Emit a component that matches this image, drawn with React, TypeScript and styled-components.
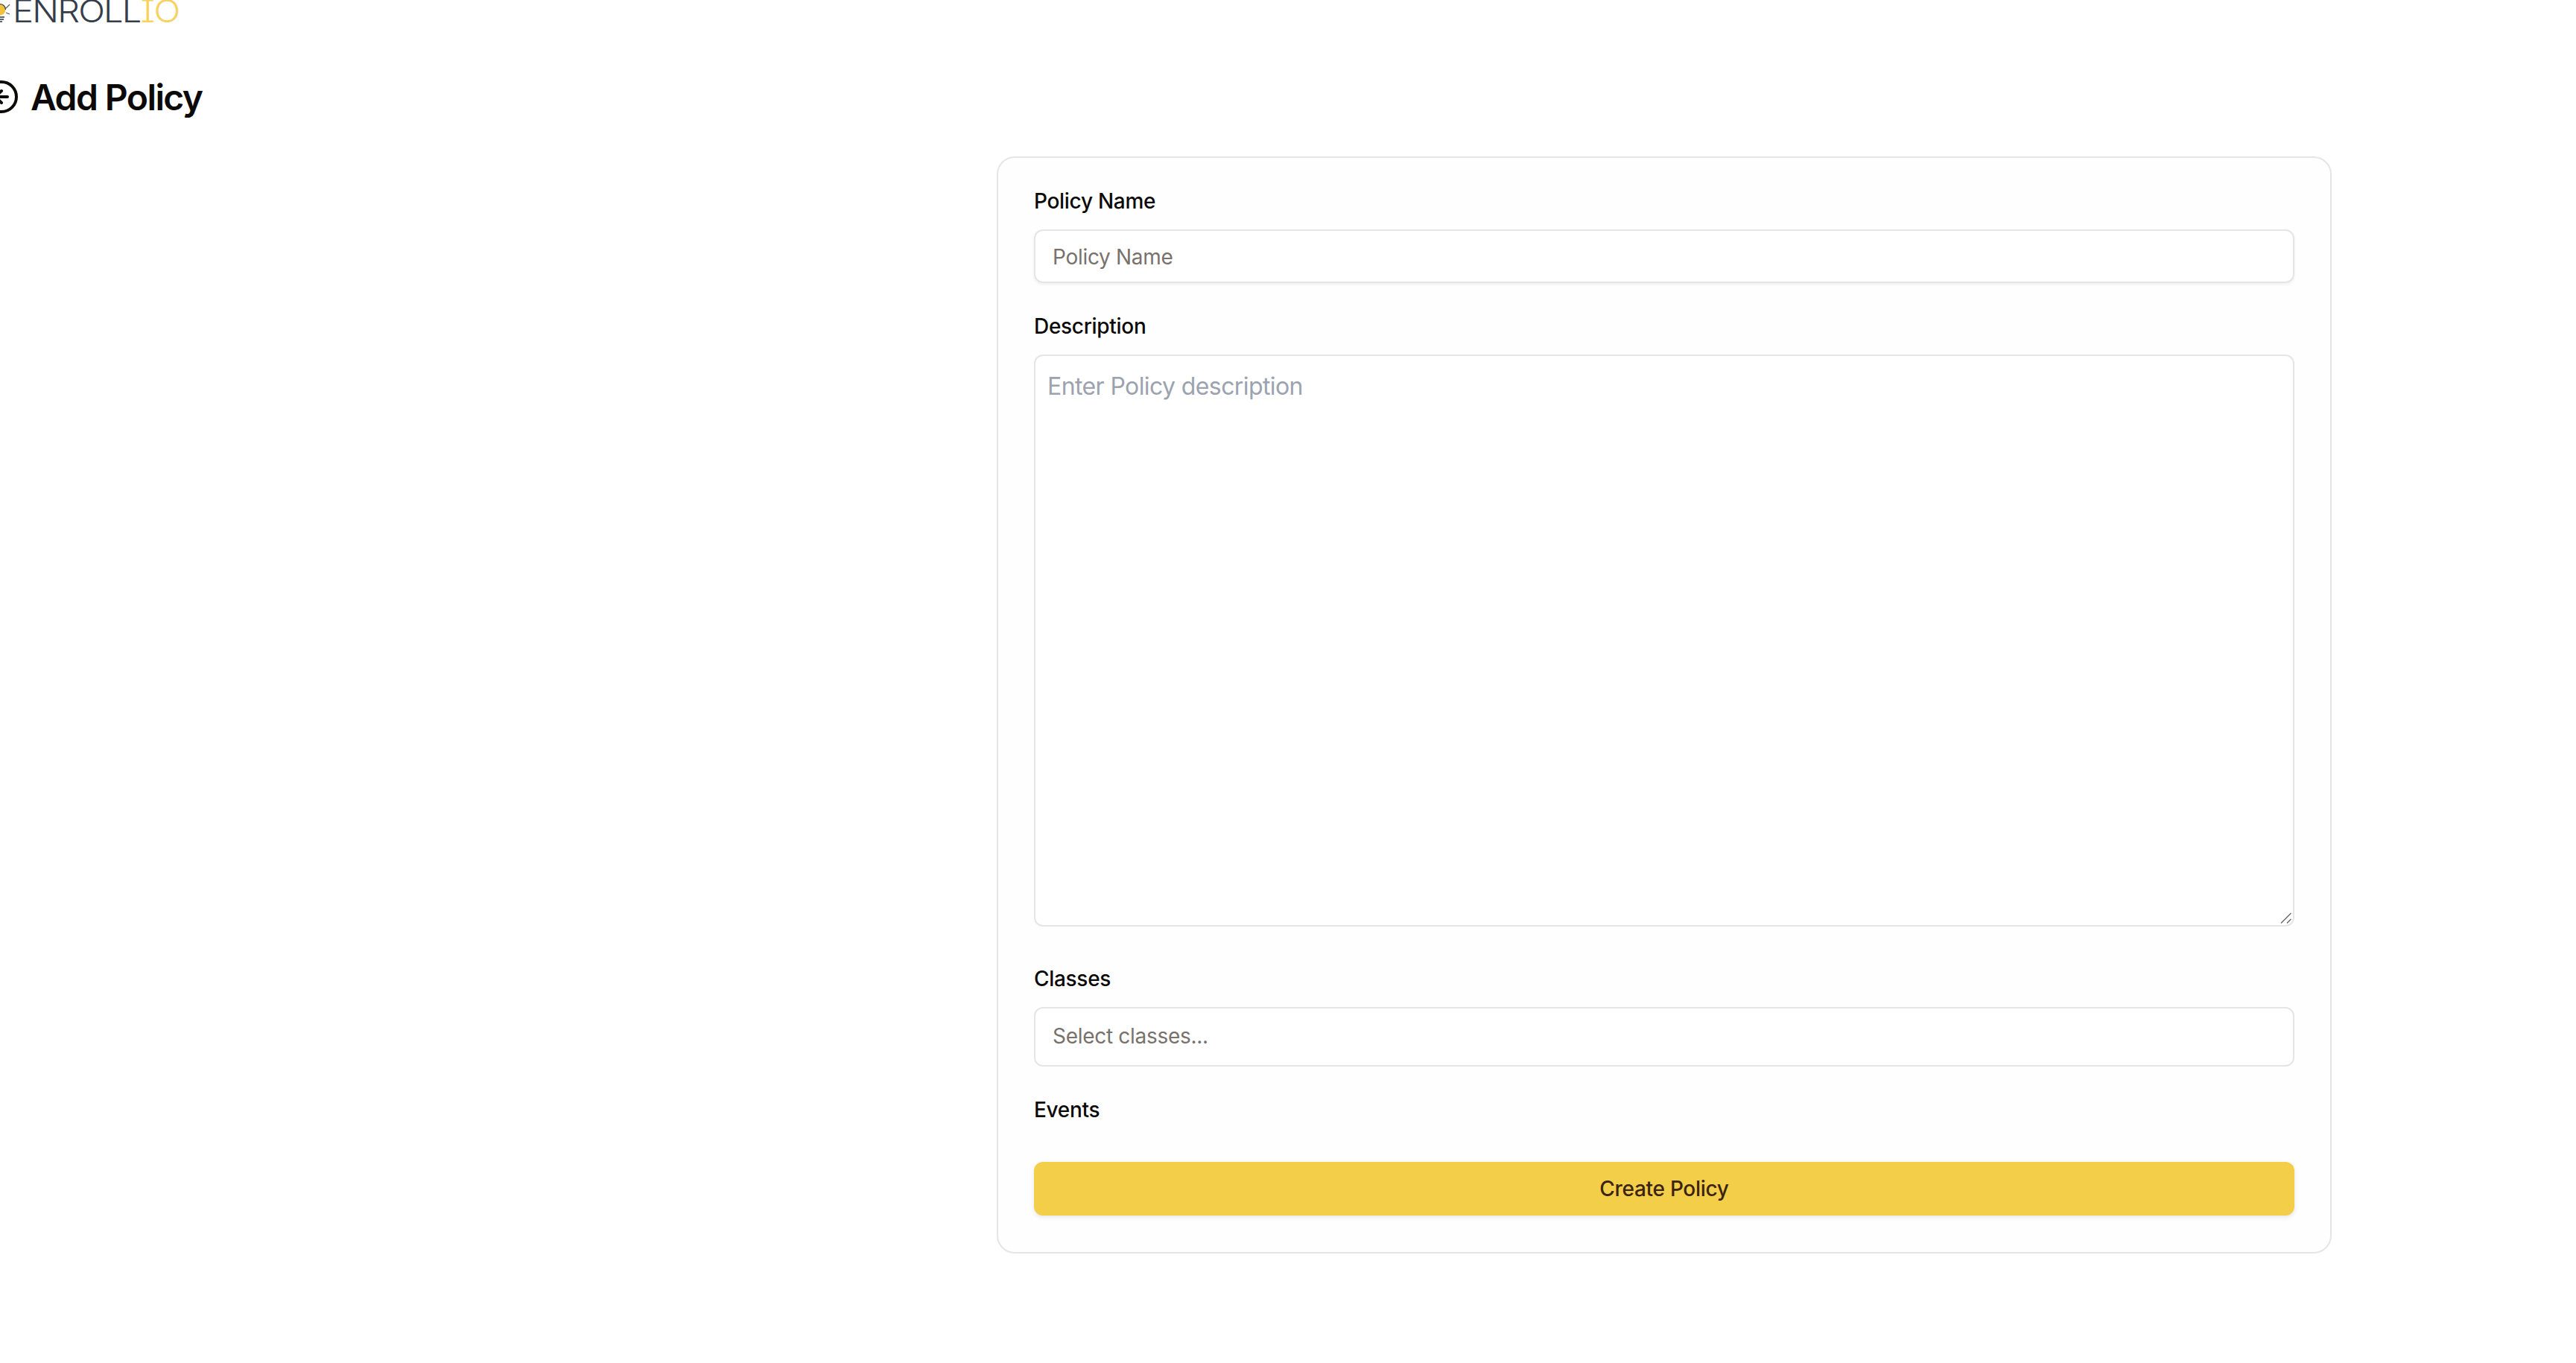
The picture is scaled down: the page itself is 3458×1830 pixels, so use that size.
import React from "react";
import styled, { createGlobalStyle } from "styled-components";
import { CircleArrowLeft } from "lucide-react";

const Global = createGlobalStyle`
  * { box-sizing: border-box; }
  html, body { margin: 0; padding: 0; background: #fff; overflow: hidden; height: 100%; }
  body { font-family: Inter, "Liberation Sans", sans-serif; color: #0c0a09; }
  #root { height: 100%; }
`;

const Page = styled.div`
  width: 3458px;
  height: 1830px;
  overflow: hidden;
  display: flex;
  flex-direction: column;
`;

const Logo = styled.div`
  display: flex;
  align-items: flex-start;
  height: 30px;
  gap: 3px;
`;

const LogoText = styled.span`
  font-family: Inter, sans-serif;
  font-feature-settings: "cv08" 1;
  font-size: 42px;
  font-weight: 350;
  line-height: 29px;
  height: 30px;
  color: #363d4a;
  letter-spacing: -1.6px;
  transform: scaleX(1.12);
  transform-origin: 0 0;
`;

const LogoAccent = styled.span`
  color: #f8d25f;
`;

const TitleRow = styled.div`
  display: flex;
  align-items: center;
  gap: 15px;
  height: 48px;
  margin-top: 76px;
  margin-left: -22px;
`;

const Title = styled.h1`
  margin: 1px 0 0;
  font-size: 48px;
  font-weight: 600;
  line-height: 48px;
  letter-spacing: -1.6px;
  color: #0c0a09;
`;

const Card = styled.form`
  width: 1792px;
  height: 1473px;
  margin-top: 56px;
  margin-left: 1338px;
  padding: 44px 48px 48px;
  border: 2px solid #e5e5e5;
  border-radius: 24px;
  background: #fefefe;
  display: flex;
  flex-direction: column;
`;

const Label = styled.label<{ $top?: number }>`
  display: block;
  height: 28px;
  margin-top: ${(p) => p.$top ?? 0}px;
  font-size: 28px;
  line-height: 28px;
  font-weight: 500;
  letter-spacing: -0.3px;
  color: #0c0a09;
`;

const TextInput = styled.input<{ $height: number; $shadow?: boolean; $lift?: number; $drop?: number }>`
  display: block;
  width: 100%;
  height: ${(p) => p.$height}px;
  margin-top: 24px;
  padding: ${(p) => p.$drop ?? 0}px 23px ${(p) => p.$lift ?? 0}px;
  border: 2px solid #e7e5e4;
  border-radius: 12px;
  background: #fff;
  font: 400 28px Inter, sans-serif;
  letter-spacing: -0.3px;
  outline: none;
  box-shadow: ${(p) => (p.$shadow ? "0 2px 4px rgba(0,0,0,0.06)" : "none")};
  &::placeholder { color: #78716c; opacity: 1; }
`;

const AreaWrap = styled.div`
  position: relative;
  margin-top: 24px;
  height: 768px;
`;

const TextArea = styled.textarea`
  display: block;
  width: 100%;
  height: 100%;
  padding: 17px 16px;
  border: 2px solid #e7e5e4;
  border-radius: 12px;
  background: #fff;
  font: 400 32px/48px Inter, sans-serif;
  letter-spacing: -0.6px;
  outline: none;
  resize: none;
  &::placeholder { color: #9ca3af; opacity: 1; }
`;

const Grip = styled.svg`
  position: absolute;
  right: 2px;
  bottom: 2px;
`;

const Submit = styled.button`
  display: flex;
  align-items: center;
  justify-content: center;
  width: 100%;
  height: 72px;
  margin-top: 56px;
  border: 0;
  border-radius: 12px;
  background: #f3ce49;
  color: #3b2410;
  font: 500 28px Inter, sans-serif;
  letter-spacing: -0.3px;
  box-shadow: 0 2px 6px rgba(0,0,0,0.1);
`;

export default function App() {
  return (
    <Page>
      <Global />
      <Logo>
        <svg width="14" height="30" viewBox="0 0 14 30" fill="none">
          <circle cx="0" cy="13" r="7.5" fill="#f2c23e" />
          <path d="M0 5.5c4.5 0 7.5 3.5 7.5 7.5" stroke="#3a3f49" strokeWidth="1.2" />
          <path d="M0 23h6M0 26h5M0 29h3" stroke="#2b3240" strokeWidth="1.6" />
          <path d="M8 11l5-5M8 17l5 2" stroke="#555b66" strokeWidth="1.2" />
        </svg>
        <LogoText>
          ENROLL<LogoAccent>IO</LogoAccent>
        </LogoText>
      </Logo>
      <TitleRow>
        <CircleArrowLeft size={48} strokeWidth={2} color="#0c0a09" />
        <Title>Add Policy</Title>
      </TitleRow>
      <Card>
        <Label>Policy Name</Label>
        <TextInput $height={72} $shadow $drop={1} placeholder="Policy Name" />
        <Label $top={44}>Description</Label>
        <AreaWrap>
          <TextArea placeholder="Enter Policy description" />
          <Grip width="18" height="18" viewBox="0 0 18 18" fill="none">
            <path d="M2 15.5L15.5 2M10 15.5L15.5 10" stroke="#6b6b6b" strokeWidth="1.5" />
          </Grip>
        </AreaWrap>
        <Label $top={56}>Classes</Label>
        <TextInput $height={80} $lift={3} placeholder="Select classes..." />
        <Label $top={44}>Events</Label>
        <Submit type="button">Create Policy</Submit>
      </Card>
    </Page>
  );
}
